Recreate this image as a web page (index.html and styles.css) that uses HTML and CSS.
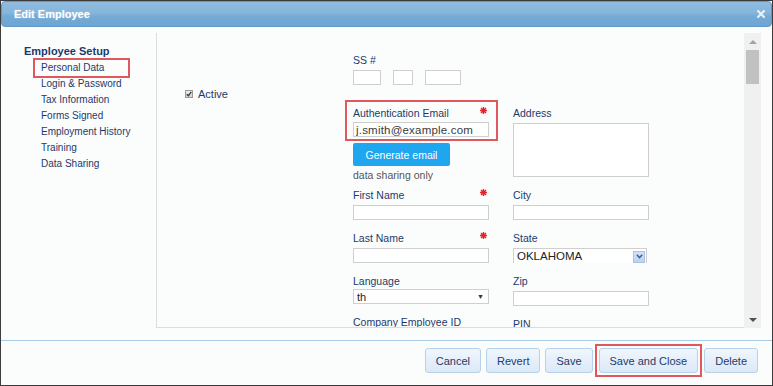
FILE: index.html
```html
<!DOCTYPE html>
<html lang="en">
<head>
    <meta charset="UTF-8">
    <meta name="viewport" content="width=device-width, initial-scale=1.0">
    <title>Edit Employee</title>
    <link rel="stylesheet" href="styles.css">
</head>
<body>
    <div class="dialog">
        <div class="titlebar">
            <span class="title">Edit Employee</span>
            <span class="close">
                <svg width="8" height="8" viewBox="0 0 8 8"><path d="M1 1L7 7M7 1L1 7" stroke="#e8f0f8" stroke-width="2.2" stroke-linecap="square"/></svg>
            </span>
        </div>

        <div class="main">
            <div class="nav">
                <div class="nav-title">Employee Setup</div>
                <ul class="nav-list">
                    <li class="nav-item active">Personal Data</li>
                    <li class="nav-item">Login &amp; Password</li>
                    <li class="nav-item">Tax Information</li>
                    <li class="nav-item">Forms Signed</li>
                    <li class="nav-item">Employment History</li>
                    <li class="nav-item">Training</li>
                    <li class="nav-item">Data Sharing</li>
                </ul>
            </div>

            <div class="panel">
                <div class="panel-body">
                    <div class="side">
                        <label class="check">
                            <span class="checkbox">
                                <svg width="6" height="6" viewBox="0 0 6 6"><path d="M0.8 3.2L2.4 4.8L5.3 0.9" fill="none" stroke="#3a3a3a" stroke-width="1.4"/></svg>
                            </span>
                            Active
                        </label>
                    </div>

                    <div class="col col-left">
                        <div class="label">SS #</div>
                        <div class="ssn">
                            <input type="text" class="input ssn-1">
                            <input type="text" class="input ssn-2">
                            <input type="text" class="input ssn-3">
                        </div>

                        <div class="auth">
                            <div class="label-row">
                                <span class="label">Authentication Email</span>
                                <span class="req"><svg width="7" height="7" viewBox="0 0 7 7"><path d="M3.5 0V7M0 3.5H7M1 1L6 6M6 1L1 6" stroke="#e3232a" stroke-width="1.4"/></svg></span>
                            </div>
                            <input type="text" class="input email" value="j.smith@example.com">
                        </div>
                        <button class="btn-primary">Generate email</button>
                        <div class="hint">data sharing only</div>

                        <div class="field">
                            <div class="label-row">
                                <span class="label">First Name</span>
                                <span class="req"><svg width="7" height="7" viewBox="0 0 7 7"><path d="M3.5 0V7M0 3.5H7M1 1L6 6M6 1L1 6" stroke="#e3232a" stroke-width="1.4"/></svg></span>
                            </div>
                            <input type="text" class="input">
                        </div>
                        <div class="field">
                            <div class="label-row">
                                <span class="label">Last Name</span>
                                <span class="req"><svg width="7" height="7" viewBox="0 0 7 7"><path d="M3.5 0V7M0 3.5H7M1 1L6 6M6 1L1 6" stroke="#e3232a" stroke-width="1.4"/></svg></span>
                            </div>
                            <input type="text" class="input">
                        </div>
                        <div class="field">
                            <div class="label-row"><span class="label">Language</span></div>
                            <div class="select lang">
                                <span>th</span>
                                <span class="lang-arrow">&#9660;</span>
                            </div>
                        </div>
                        <div class="field">
                            <div class="label-row"><span class="label">Company Employee ID</span></div>
                            <input type="text" class="input">
                        </div>
                    </div>

                    <div class="col col-right">
                        <div class="label-row"><span class="label">Address</span></div>
                        <textarea class="input address"></textarea>

                        <div class="field">
                            <div class="label-row"><span class="label">City</span></div>
                            <input type="text" class="input">
                        </div>
                        <div class="field">
                            <div class="label-row"><span class="label">State</span></div>
                            <div class="select state">
                                <span>OKLAHOMA</span>
                                <span class="state-arrow">
                                    <svg width="7" height="5" viewBox="0 0 7 5"><path d="M0.8 0.8L3.5 3.6L6.2 0.8" fill="none" stroke="#4d5f80" stroke-width="1.5"/></svg>
                                </span>
                            </div>
                        </div>
                        <div class="field">
                            <div class="label-row"><span class="label">Zip</span></div>
                            <input type="text" class="input">
                        </div>
                        <div class="field">
                            <div class="label-row"><span class="label">PIN</span></div>
                            <input type="text" class="input">
                        </div>
                    </div>
                </div>

                <div class="scrollbar">
                    <div class="sb-btn"><span class="tri-up"></span></div>
                    <div class="sb-thumb"></div>
                    <div class="sb-track"></div>
                    <div class="sb-btn"><span class="tri-down"></span></div>
                </div>
            </div>
        </div>

        <div class="footer">
            <button class="btn">Cancel</button>
            <button class="btn">Revert</button>
            <button class="btn">Save</button>
            <span class="marked"><button class="btn">Save and Close</button></span>
            <button class="btn">Delete</button>
        </div>
    </div>
</body>
</html>
```

FILE: styles.css
```css
* { box-sizing: border-box; }
body {
    margin: 0;
    font-family: "Liberation Sans", Arial, sans-serif;
    background-color: #fbfdfd;
}
.dialog {
    width: 773px;
    height: 386px;
    border: 1px solid #3c3c3c;
    background-color: #fbfdfd;
    display: flex;
    flex-direction: column;
}
.titlebar {
    height: 26px;
    flex-shrink: 0;
    display: flex;
    align-items: center;
    justify-content: space-between;
    padding: 0 6px 0 12px;
    border: 1px solid #6199cb;
    border-radius: 4px;
    background: linear-gradient(#8fbcdf, #86b5db 45%, #74aad5 60%, #6da5d2);
}
.title {
    color: white;
    font-weight: bold;
    font-size: 11px;
    text-shadow: 0 0 2px rgba(255, 255, 255, 0.4);
}
.close { display: flex; }

.main {
    height: 313px;
    display: flex;
    flex-shrink: 0;
}
.nav {
    width: 155px;
    padding-top: 17px;
    color: #1b3a6b;
}
.nav-title {
    font-weight: bold;
    font-size: 11px;
    line-height: 14px;
    padding-left: 23px;
    margin-bottom: 2px;
}
.nav-list {
    list-style: none;
    margin: 0;
    padding: 0;
}
.nav-item {
    font-size: 10px;
    line-height: 16px;
    white-space: nowrap;
    margin-left: 34px;
    padding-left: 6px;
    width: 93px;
}
.nav-item.active { outline: 2px solid #e0585e; }

.panel {
    margin-top: 6px;
    width: 605px;
    height: 295px;
    display: flex;
}
.panel-body {
    flex: 1;
    display: flex;
    overflow: hidden;
    border-left: 1px solid #dcdcdc;
    border-bottom: 1px solid #dcdcdc;
    color: #1b3a6b;
    font-size: 10.5px;
}
.side {
    width: 196px;
    flex-shrink: 0;
    padding: 54px 0 0 28px;
}
.check {
    display: flex;
    align-items: center;
    line-height: 14px;
    font-size: 11px;
}
.checkbox {
    width: 8px;
    height: 8px;
    margin-right: 5px;
    border: 1px solid #9a9a9a;
    background: linear-gradient(#ededed, #d2d2d2);
    display: flex;
    align-items: center;
    justify-content: center;
}
.col {
    width: 136px;
    flex-shrink: 0;
}
.col-left { padding-top: 20px; }
.col-right {
    margin-left: 24px;
    padding-top: 73px;
}
.label { line-height: 14px; }
.label-row {
    display: flex;
    justify-content: space-between;
    height: 14px;
}
.req {
    display: flex;
    margin: 1px 2px 0 0;
}
.input {
    display: block;
    width: 136px;
    height: 15px;
    margin: 3px 0 0;
    padding: 0 3px;
    border: 1px solid #cfcfcf;
    background: white;
    font-family: inherit;
    font-size: 11px;
    color: #333;
    outline: none;
}
.ssn {
    display: flex;
    gap: 12px;
}
.ssn-1 { width: 28px; }
.ssn-2 { width: 20px; }
.ssn-3 { width: 36px; }
.auth {
    margin: 15px -9px 0 -8px;
    padding: 4px 7px 2px 6px;
    border: 2px solid #e0585e;
}
.auth .input { margin-top: 2px; }
.email {
    font-size: 11.5px;
    letter-spacing: 0.2px;
    color: #3a3a3a;
    padding-left: 2px;
}
.btn-primary {
    display: block;
    margin-top: 2px;
    width: 97px;
    height: 23px;
    border: none;
    border-radius: 2px;
    background-color: #1fa6ee;
    color: white;
    font-family: inherit;
    font-size: 10.5px;
}
.hint {
    margin-top: 2px;
    line-height: 14px;
    color: #555;
}
.field { margin-top: 11px; }
.hint + .field { margin-top: 6px; }
.address {
    height: 54px;
    resize: none;
}
.select {
    display: flex;
    align-items: center;
    justify-content: space-between;
    height: 15px;
    margin-top: 1px;
    padding: 0 3px;
    border: 1px solid #cfcfcf;
    background: white;
    font-size: 11px;
    color: #222;
}
.lang-arrow {
    font-size: 7px;
    color: #333;
    margin-right: 1px;
}
.state {
    margin-top: 3px;
    width: 134px;
    border-bottom: none;
    padding-right: 1px;
    font-size: 11.5px;
}
.state-arrow {
    width: 12px;
    height: 12px;
    margin-top: 1px;
    background: linear-gradient(#d2e1f7, #bcd2f2);
    border: 1px solid #aac2e6;
    display: flex;
    align-items: center;
    justify-content: center;
}

.scrollbar {
    width: 17px;
    display: flex;
    flex-direction: column;
    background-color: #f0f0f0;
}
.sb-btn {
    height: 17px;
    display: flex;
    align-items: center;
    justify-content: center;
}
.tri-up {
    border-left: 4px solid transparent;
    border-right: 4px solid transparent;
    border-bottom: 4px solid #a3a3a3;
}
.tri-down {
    border-left: 4px solid transparent;
    border-right: 4px solid transparent;
    border-top: 4px solid #505050;
}
.sb-thumb {
    height: 34px;
    margin: 0 2px;
    background-color: #c1c1c1;
}
.sb-track { flex: 1; }

.footer {
    border-top: 1px solid #a8cbe8;
    padding: 7px 14px 0 0;
    display: flex;
    align-items: flex-start;
    justify-content: flex-end;
    gap: 5px;
}
.btn {
    height: 25px;
    padding: 0 10px;
    border: 1px solid #b9d1e8;
    border-radius: 3px;
    background: linear-gradient(#f0f6fd, #dbe9f7);
    color: #1f3b6b;
    font-family: inherit;
    font-size: 11px;
}
.marked {
    display: flex;
    margin: 0 1px;
    outline: 2px solid #e0585e;
    outline-offset: 2px;
}
```
